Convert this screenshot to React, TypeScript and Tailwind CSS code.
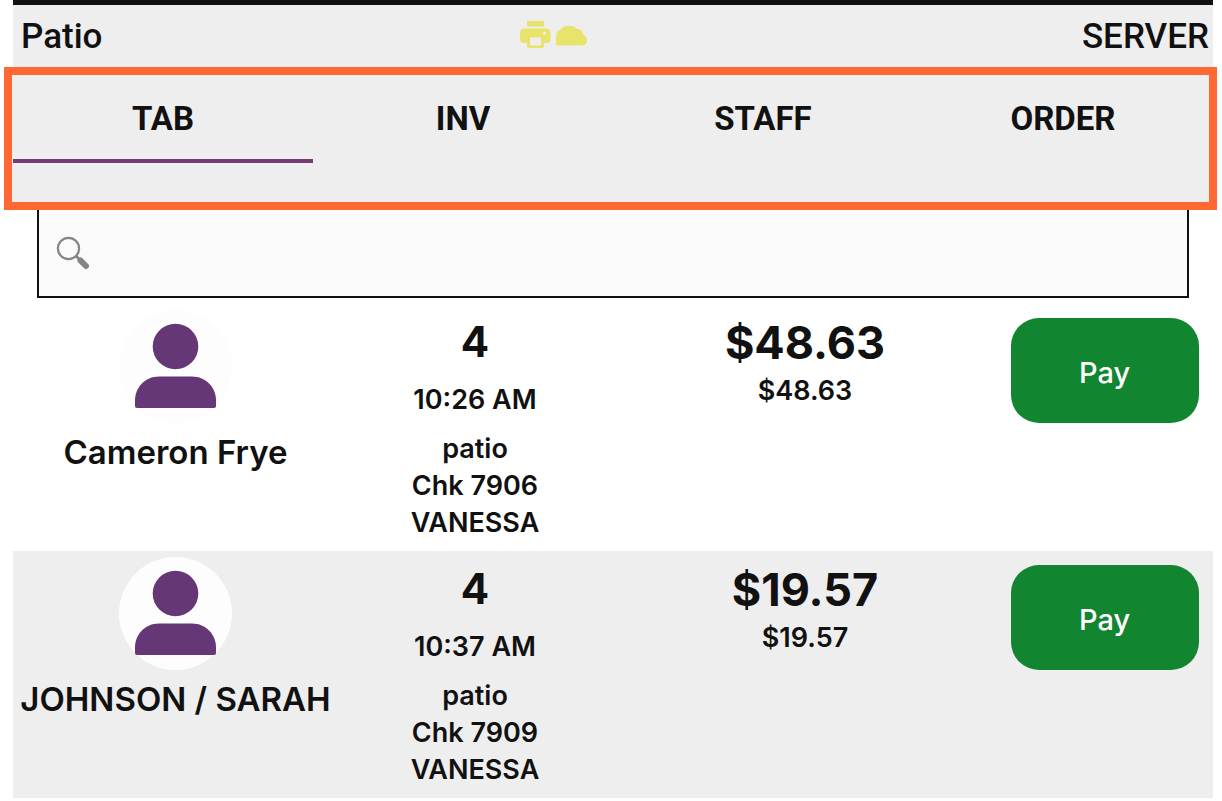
import { useState } from 'react'

interface Check {
  id: number
  customer: string
  guests: number
  openedAt: string
  area: string
  server: string
  total: string
  due: string
}

const TABS = ['TAB', 'INV', 'STAFF', 'ORDER']

const CHECKS: Check[] = [
  { id: 7906, customer: 'Cameron Frye', guests: 4, openedAt: '10:26 AM', area: 'patio', server: 'VANESSA', total: '$48.63', due: '$48.63' },
  { id: 7909, customer: 'JOHNSON / SARAH', guests: 4, openedAt: '10:37 AM', area: 'patio', server: 'VANESSA', total: '$19.57', due: '$19.57' },
]

export default function App() {
  const [activeTab, setActiveTab] = useState('TAB')
  const [query, setQuery] = useState('')

  const visible = CHECKS.filter(c => c.customer.toLowerCase().includes(query.toLowerCase()))

  return (
    <div className="min-h-screen bg-white font-['Inter',sans-serif] text-[#111111]">
      <header className="ml-[13px] mr-[9px] grid h-[67px] grid-cols-3 items-center border-t-[5px] border-[#111111] bg-[#eeeeee] pt-0.5 pl-2 pr-1 font-['Roboto',sans-serif] text-[35px] leading-[60px] font-medium">
        <span>Patio</span>
        <span className="flex items-center gap-1 justify-self-center pr-[124px] pb-1">
          <PrinterIcon />
          <CloudIcon />
        </span>
        <span className="justify-self-end">SERVER</span>
      </header>

      <nav className="ml-1 mr-[5px] border-8 border-[#ff6833] bg-[#eeeeee] pb-[39px] pl-px">
        <div className="-mr-1 grid grid-cols-4">
          {TABS.map(tab => (
            <button
              key={tab}
              onClick={() => setActiveTab(tab)}
              className={`h-[88px] border-b-4 pt-1 font-['Roboto',sans-serif] text-[33px] leading-[40px] font-bold ${activeTab === tab ? 'border-[#763a74]' : 'border-transparent'}`}
            >
              {tab}
            </button>
          ))}
        </div>
      </nav>

      <label className="ml-[37px] mr-[33px] flex h-[88px] items-center border-2 border-t-0 border-[#111111] bg-[#fafafa] pl-4">
        <SearchIcon />
        <input
          type="text"
          aria-label="Search checks"
          value={query}
          onChange={e => setQuery(e.target.value)}
          className="h-full min-w-0 flex-1 bg-transparent px-3 text-[27px] outline-none"
        />
      </label>

      <ul className="ml-[13px] mr-[9px] mt-1.5">
        {visible.map(check => (
          <CheckRow key={check.id} check={check} />
        ))}
      </ul>
    </div>
  )
}

function CheckRow({ check }: { check: Check }) {
  return (
    <li className="grid min-h-[247px] grid-cols-[325fr_274fr_386fr_215fr] pt-1.5 text-center text-[27px] leading-[37px] font-semibold even:bg-[#eeeeee]">
      <div className="flex flex-col items-center">
        <Avatar />
        <span className="mt-[7px] text-[33px] leading-[44px] whitespace-nowrap">{check.customer}</span>
      </div>
      <div>
        <div className="text-[42px] leading-[64px] font-bold">{check.guests}</div>
        <div className="mt-[7px]">{check.openedAt}</div>
        <div className="mt-3">{check.area}</div>
        <div>Chk {check.id}</div>
        <div>{check.server}</div>
      </div>
      <div>
        <div className="pt-1 text-[45px] leading-[58px] font-bold">{check.total}</div>
        <div>{check.due}</div>
      </div>
      <div className="pt-2 pr-0.5">
        <button className="h-[105px] w-[188px] rounded-[28px] bg-[#118530] pt-1 text-[29px] font-medium text-white">Pay</button>
      </div>
    </li>
  )
}

function Avatar() {
  return (
    <svg className="size-[113px]" viewBox="0 0 113 113" aria-hidden="true">
      <circle cx="56.5" cy="56.5" r="56.5" fill="#fdfdfd" />
      <circle cx="56.5" cy="36.5" r="22.8" fill="#653776" />
      <path d="M40 66.5h33c14 0 24 11 24 24v5.5q0 2-2 2H18q-2 0-2-2V90.500c0-13 10-24 24-24z" fill="#653776" />
    </svg>
  )
}

function PrinterIcon() {
  return (
    <svg className="h-7 w-8" viewBox="0 0 32 28" fill="#e8e36b" aria-hidden="true">
      <path d="M8 0h17v5.500H8z" />
      <path fillRule="evenodd" d="M5 7.500h22q4.500 0 4.500 4.500v6.500q0 3.500-3.500 3.500h-3v3q0 2-2 2H10q-2 0-2-2v-3H5q-4 0-4-4v-6q0-4.500 4-4.500zM11 16.500v8h11v-8zM25.500 10.800a1.600 1.600 0 1 0 .01 0z" />
    </svg>
  )
}

function CloudIcon() {
  return (
    <svg className="h-7 w-8" viewBox="0 0 32 28" fill="#e8e36b" aria-hidden="true">
      <path d="M2.500 24.500Q1 24.500 1 22v-6q0-6 5-7.500Q8 5 12 5h4.500q3 0 4.500 2.500c5 .3 7 3 7.500 6.500q3.500 1.500 3.500 5.500-.3 5-5 5z" />
    </svg>
  )
}

function SearchIcon() {
  return (
    <svg className="size-9" viewBox="0 0 36 36" fill="none" aria-hidden="true">
      <circle cx="13.500" cy="13.500" r="10.600" stroke="#858585" strokeWidth="2.200" />
      <path d="M21 21l4 4" stroke="#858585" strokeWidth="2.500" />
      <path d="M25.500 25.500l5.500 5.500" stroke="#858585" strokeWidth="6" strokeLinecap="round" />
    </svg>
  )
}
